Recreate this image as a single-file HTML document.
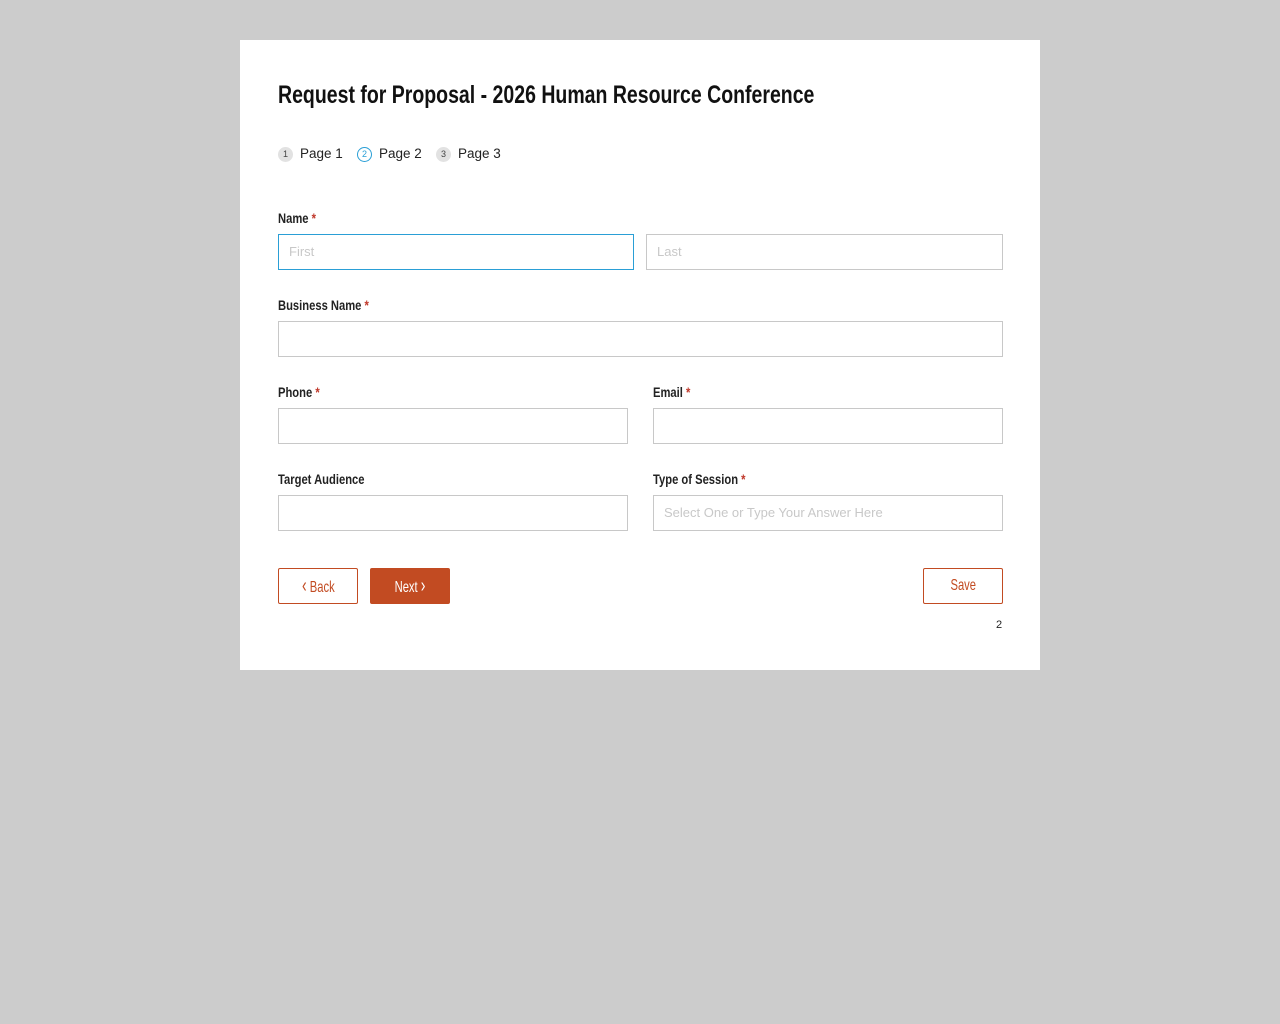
<!DOCTYPE html>
<html><head><style>
body{margin:0;background:#cccccc;width:1280px;height:1024px;font-family:"Liberation Sans",sans-serif;}
.card{position:absolute;left:240px;top:40px;width:800px;height:630px;background:#fff;}
.abs{position:absolute;}
.cond{display:inline-block;transform-origin:0 50%;white-space:nowrap;}
h1{position:absolute;left:38px;top:40px;margin:0;font-size:25px;font-weight:bold;color:#111;line-height:30px;}
.lbl{position:absolute;font-size:14px;font-weight:bold;color:#222;line-height:18px;}
.lbl i{color:#c0392b;font-style:normal;}
.inp{position:absolute;box-sizing:border-box;height:36px;border:1px solid #c8c8c8;background:#fff;font-size:13px;color:#c8c8c8;padding-left:10px;line-height:34px;}
.step{position:absolute;top:106px;font-size:13.5px;color:#222;line-height:16px;}
.dot{display:inline-block;width:15px;height:15px;border-radius:50%;background:#e2e2e2;font-size:9px;text-align:center;line-height:15px;color:#444;margin-right:7px;vertical-align:1px;box-sizing:border-box;}
.btn{position:absolute;box-sizing:border-box;height:36px;width:80px;border:1px solid #c24b22;border-radius:2px;color:#c24b22;font-size:16px;text-align:center;line-height:34px;}
</style></head><body>
<div class="card">
<h1><span class="cond" style="transform:scaleX(0.78)">Request for Proposal - 2026 Human Resource Conference</span></h1>
<div class="step" style="left:38px"><span class="dot">1</span>Page 1</div>
<div class="step" style="left:117px"><span class="dot" style="background:#fff;border:1px solid #2a9fd6;color:#2a9fd6;line-height:13px">2</span>Page 2</div>
<div class="step" style="left:196px"><span class="dot">3</span>Page 3</div>

<div class="lbl" style="left:38px;top:169px"><span class="cond" style="transform:scaleX(0.8)">Name <i>*</i></span></div>
<div class="inp" style="left:38px;top:194px;width:356px;border-color:#2a9fd6">First</div>
<div class="inp" style="left:406px;top:194px;width:357px">Last</div>

<div class="lbl" style="left:38px;top:256px"><span class="cond" style="transform:scaleX(0.8)">Business Name <i>*</i></span></div>
<div class="inp" style="left:38px;top:281px;width:725px"></div>

<div class="lbl" style="left:38px;top:343px"><span class="cond" style="transform:scaleX(0.8)">Phone <i>*</i></span></div>
<div class="inp" style="left:38px;top:368px;width:350px"></div>
<div class="lbl" style="left:413px;top:343px"><span class="cond" style="transform:scaleX(0.8)">Email <i>*</i></span></div>
<div class="inp" style="left:413px;top:368px;width:350px"></div>

<div class="lbl" style="left:38px;top:430px"><span class="cond" style="transform:scaleX(0.8)">Target Audience</span></div>
<div class="inp" style="left:38px;top:455px;width:350px"></div>
<div class="lbl" style="left:413px;top:430px"><span class="cond" style="transform:scaleX(0.8)">Type of Session <i>*</i></span></div>
<div class="inp" style="left:413px;top:455px;width:350px">Select One or Type Your Answer Here</div>

<div class="btn" style="left:38px;top:528px"><span class="cond" style="transform:scaleX(0.7);transform-origin:50% 50%"><span style="font-size:20px">&#8249;</span> Back</span></div>
<div class="btn" style="left:130px;top:528px;background:#c24b22;color:#fff"><span class="cond" style="transform:scaleX(0.7);transform-origin:50% 50%">Next <span style="font-size:20px">&#8250;</span></span></div>
<div class="btn" style="left:683px;top:528px"><span class="cond" style="transform:scaleX(0.7);transform-origin:50% 50%">Save</span></div>
<div class="abs" style="left:756px;top:579px;font-size:11px;color:#222">2</div>
</div>
</body></html>
